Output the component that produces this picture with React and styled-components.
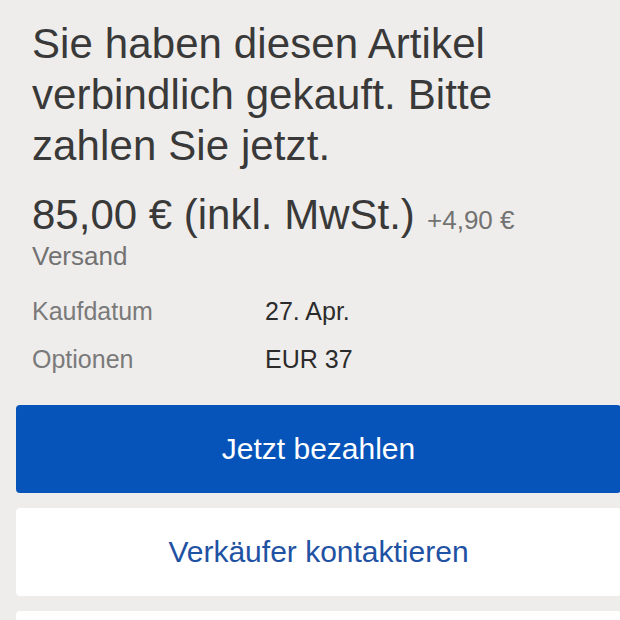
import React from "react";
import styled, { createGlobalStyle } from "styled-components";

const Global = createGlobalStyle`
  html, body {
    margin: 0;
    padding: 0;
    background: #efedeb;
    overflow: hidden;
  }
  body {
    font-family: "Liberation Sans", Arial, sans-serif;
  }
`;

const Page = styled.main`
  padding-top: 18px;
  height: 620px;
  overflow: hidden;
  box-sizing: border-box;
`;

const Summary = styled.section`
  padding: 0 32px;
`;

const Headline = styled.h1`
  margin: 0;
  font-size: 42px;
  line-height: 51px;
  font-weight: 400;
  letter-spacing: 0.1px;
  color: #393939;
`;

const PriceLine = styled.p`
  margin: 23px 0 0;
  font-size: 26px;
  line-height: 36px;
  color: #727272;
`;

const Price = styled.span`
  font-size: 42px;
  line-height: 42px;
  margin-right: 5px;
  color: #393939;
`;

const Details = styled.dl`
  margin: 13px 0 0;
  display: grid;
  grid-template-columns: 233px 1fr;
  font-size: 25px;
  line-height: 48px;
`;

const Label = styled.dt`
  margin: 0;
  color: #7a7a7a;
`;

const Value = styled.dd`
  margin: 0;
  color: #2b2b2b;
`;

const Actions = styled.div`
  margin: 22px -1px 0 16px;
  display: flex;
  flex-direction: column;
  gap: 15px;
`;

const ActionButton = styled.button`
  flex: none;
  height: 88px;
  border: none;
  border-radius: 4px;
  font-family: "Liberation Sans", Arial, sans-serif;
  font-size: 30px;
  font-weight: 400;
  cursor: pointer;
  background: ${(p) => (p.$primary ? "#0654ba" : "#ffffff")};
  color: ${(p) => (p.$primary ? "#ffffff" : "#1f52a3")};
`;

export default function App() {
  return (
    <>
      <Global />
      <Page>
        <Summary>
          <Headline>
            Sie haben diesen Artikel verbindlich gekauft. Bitte zahlen Sie jetzt.
          </Headline>
          <PriceLine>
            <Price>85,00 € (inkl. MwSt.)</Price> +4,90 € Versand
          </PriceLine>
          <Details>
            <Label>Kaufdatum</Label>
            <Value>27. Apr.</Value>
            <Label>Optionen</Label>
            <Value>EUR 37</Value>
          </Details>
        </Summary>
        <Actions>
          <ActionButton $primary>Jetzt bezahlen</ActionButton>
          <ActionButton>Verkäufer kontaktieren</ActionButton>
          <ActionButton>&nbsp;</ActionButton>
        </Actions>
      </Page>
    </>
  );
}
